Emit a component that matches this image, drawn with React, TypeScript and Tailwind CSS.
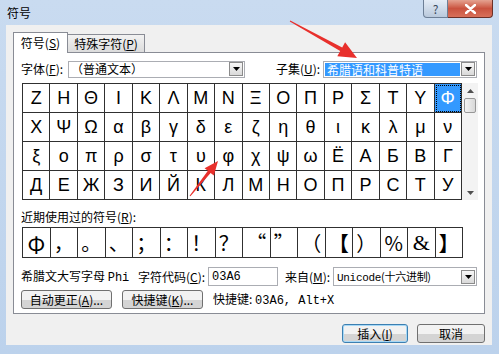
import React from "react";

const CJK = "font-['Noto_Sans_CJK_SC','Noto_Sans',sans-serif]";
const MONO = "font-['Liberation_Mono','Noto_Sans_CJK_SC',monospace]";

const rows: string[][] = [
  ["Z", "Η", "Θ", "Ι", "Κ", "Λ", "Μ", "Ν", "Ξ", "Ο", "Π", "Ρ", "Σ", "Τ", "Υ", "Φ"],
  ["Χ", "Ψ", "Ω", "α", "β", "γ", "δ", "ε", "ζ", "η", "θ", "ι", "κ", "λ", "μ", "ν"],
  ["ξ", "ο", "π", "ρ", "σ", "τ", "υ", "φ", "χ", "ψ", "ω", "Ё", "А", "Б", "В", "Г"],
  ["Д", "Е", "Ж", "З", "И", "Й", "К", "Л", "М", "Н", "О", "П", "Р", "С", "Т", "У"],
];

const recent = ["Φ", "，", "。", "、", "；", "：", "！", "？", "“", "”", "（", "【", "）", "%", "&", "】"];

function DropBtn() {
  return (
    <div className="w-[14px] h-[14px] border border-[#8b8b8b] bg-gradient-to-b from-[#f7f7f7] to-[#d9d9d9] flex items-center justify-center">
      <svg width="7" height="4" viewBox="0 0 7 4">
        <path d="M0 0 L7 0 L3.5 4 Z" fill="#000" />
      </svg>
    </div>
  );
}

function Btn({ children, w, primary }: { children: React.ReactNode; w: string; primary?: boolean }) {
  return (
    <div
      className={`${w} h-[19px] rounded-[3px] border ${
        primary ? "border-[#3c7fb1] shadow-[inset_0_0_0_1px_#a6d8f6]" : "border-[#707070]"
      } bg-gradient-to-b from-[#f2f2f2] from-50% to-[#d4d4d4] to-50% flex items-center justify-center text-[12px] leading-[14px] text-black`}
    >
      {children}
    </div>
  );
}

export default function App() {
  return (
    <div className={`relative w-[499px] h-[354px] overflow-hidden bg-gradient-to-b from-[#c9dbf0] to-[#bcd2ec] flex flex-col ${CJK} text-black`}>
      {/* title bar */}
      <div className="h-[25px] flex items-start shrink-0">
        <span className="ml-[7px] mt-[6px] text-[12px] leading-[14px]">符号</span>
        <div className="ml-auto mr-[6px] flex">
          <div className="w-[25px] h-[18px] border border-t-0 border-[#6d7f96] rounded-bl-[4px] bg-gradient-to-b from-[#e4ecf6] to-[#b9c9dc] flex items-center justify-center text-[12px] leading-[12px] text-[#3a4a5e]">
            ?
          </div>
          <div className="w-[45px] h-[18px] border border-t-0 border-l-0 border-[#6b3028] rounded-br-[4px] bg-gradient-to-b from-[#e4a291] via-[#c9523f] to-[#d8705a] flex items-center justify-center">
            <svg width="11" height="10" viewBox="0 0 11 10">
              <path d="M1 1 L10 9 M10 1 L1 9" stroke="#fff" strokeWidth="2.4" strokeLinecap="round" />
            </svg>
          </div>
        </div>
      </div>

      {/* client */}
      <div className="ml-[6px] w-[486px] h-[320px] bg-[#f0f0f0] flex flex-col px-[7px] pt-[7px] shrink-0">
        {/* tabs */}
        <div className="flex items-end h-[21px] relative z-10">
          <div className="w-[55px] h-[21px] bg-white border border-b-0 border-[#898c95] flex items-center justify-center text-[12px] leading-[14px]">
            符号(<u>S</u>)
          </div>
          <div className="w-[77px] h-[18px] mb-[1px] bg-gradient-to-b from-[#f2f2f2] to-[#dcdcdc] border border-l-0 border-b-0 border-[#898c95] flex items-center justify-center text-[12px] leading-[14px]">
            特殊字符(<u>P</u>)
          </div>
        </div>
        {/* panel */}
        <div className="-mt-px h-[262px] bg-white border border-[#898c95] flex flex-col pl-[7px] pt-[8px]">
          {/* font row */}
          <div className="flex items-center h-[16px] text-[12px] leading-[14px]">
            <span className="w-[47px]">字体(<u>F</u>):</span>
            <div className="w-[177px] h-[17px] border border-[#abadb3] bg-white flex items-center pl-[2px] pr-[1px]">
              <span className="flex-1">（普通文本）</span>
              <DropBtn />
            </div>
            <span className="ml-[31px] w-[47px]">子集(<u>U</u>):</span>
            <div className="w-[154px] h-[17px] border border-[#abadb3] bg-white flex items-center pl-[1px] pr-[1px]">
              <span className="flex-1 bg-[#3399ff] text-white h-[13px] leading-[13px] pl-[2px] mr-[1px]">希腊语和科普特语</span>
              <DropBtn />
            </div>
          </div>

          {/* grid + scrollbar */}
          <div className="flex mt-[6px] ml-[1px]">
            <div className="w-[440px] grid grid-cols-16 border-l border-t border-[#303030] font-['Liberation_Sans','DejaVu_Sans',sans-serif]">
              {rows.flat().map((ch, i) => {
                const sel = i === 15;
                return (
                  <div
                    key={i}
                    className={`h-[29px] border-r border-b border-[#303030] flex items-center justify-center text-[18px] leading-none ${
                      sel ? "bg-[#3399ff] text-white outline-1 outline-dotted outline-black -outline-offset-2" : ""
                    }`}
                  >
                    {ch}
                  </div>
                );
              })}
            </div>
            <div className="w-[16px] h-[117px] bg-[#f3f3f3] flex flex-col items-center">
              <div className="h-[15px] flex items-center justify-center">
                <svg width="7" height="4" viewBox="0 0 7 4">
                  <path d="M0 4 L7 4 L3.5 0 Z" fill="#505050" />
                </svg>
              </div>
              <div className="w-[12px] h-[15px] border border-[#979797] rounded-[2px] bg-gradient-to-r from-[#f3f3f3] to-[#d8d8d8]" />
              <div className="flex-1" />
              <div className="h-[14px] flex items-center justify-center">
                <svg width="7" height="4" viewBox="0 0 7 4">
                  <path d="M0 0 L7 0 L3.5 4 Z" fill="#505050" />
                </svg>
              </div>
            </div>
          </div>

          {/* recent */}
          <div className="mt-[10px] text-[12px] leading-[14px]">近期使用过的符号(<u>R</u>):</div>
          <div className="mt-[3px] ml-[1px] w-[441px] grid grid-cols-16 border-l border-t border-[#303030]">
            {recent.map((ch, i) => (
              <div
                key={i}
                className={`h-[30px] border-r border-b border-[#303030] flex items-center justify-center leading-none ${
                  i === 0 ? "text-[22px] font-['Noto_Sans_CJK_SC',sans-serif]" : i === 14 ? "text-[22px] font-['Liberation_Serif',serif]" : "text-[20px]"
                } ${i === 11 || i === 15 ? "font-bold" : ""}`}
              >
                {ch}
              </div>
            ))}
          </div>

          {/* info row */}
          <div className="mt-[9px] flex items-center h-[19px] text-[12px] leading-[14px]">
            <span className="w-[117px]">
              希腊文大写字母 <span className={MONO}>Phi</span>
            </span>
            <span className="w-[70px]">字符代码(<u>C</u>):</span>
            <div className={`w-[70px] h-[19px] border border-[#abadb3] bg-white flex items-center pl-[3px] ${MONO} text-[12px]`}>03A6</div>
            <span className="ml-[7px] w-[48px]">来自(<u>M</u>):</span>
            <div className="w-[144px] h-[19px] border border-[#abadb3] bg-white flex items-center pl-[3px] pr-[1px]">
              <span className={`flex-1 ${MONO} text-[11px] tracking-[-0.3px]`}>
                Unicode<span className={CJK}>(十六进制)</span>
              </span>
              <DropBtn />
            </div>
          </div>

          {/* buttons row */}
          <div className="mt-[4px] flex items-center">
            <Btn w="w-[91px]">
              自动更正(<u>A</u>)...
            </Btn>
            <div className="ml-[10px]">
              <Btn w="w-[81px]">
                快捷键(<u>K</u>)...
              </Btn>
            </div>
            <span className="ml-[10px] text-[12px] leading-[14px]">
              快捷键: <span className={MONO}>03A6, Alt+X</span>
            </span>
          </div>
        </div>

        {/* bottom buttons */}
        <div className="mt-[10px] flex justify-end gap-[9px]">
          <Btn w="w-[66px]" primary>
            插入(<u>I</u>)
          </Btn>
          <Btn w="w-[68px]">取消</Btn>
        </div>
      </div>

      {/* bottom frame */}
      <div className="flex-1" />

      {/* red arrows overlay */}
      <svg className="absolute left-0 top-0 pointer-events-none" width="499" height="354" viewBox="0 0 499 354">
        <polygon points="289.8,21.4 290.2,20.6 342.2,47.5 345.1,42.3 357,58 337.3,56.3 340.2,51.1" fill="#e8302c" />
        <polygon points="189.6,195.7 190.4,196.3 210.6,173.0 213.9,175.6 218,161 204.6,168.2 207.9,170.8" fill="#e8302c" />
      </svg>
    </div>
  );
}
